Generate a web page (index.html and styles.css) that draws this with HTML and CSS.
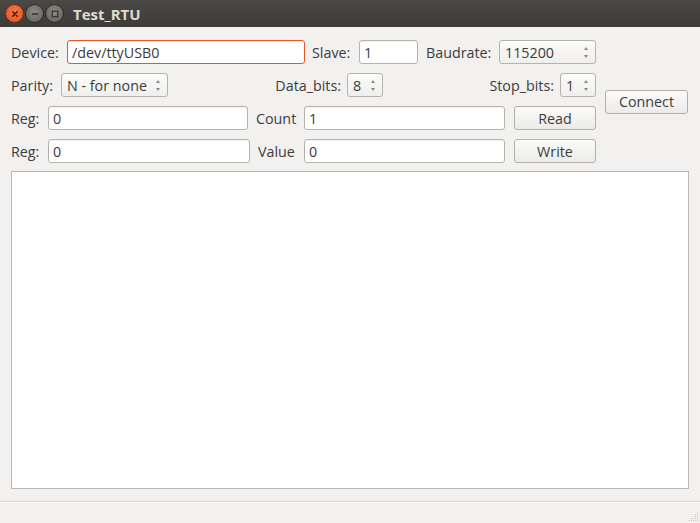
FILE: index.html
```html
<!DOCTYPE html>
<html>
<head>
<meta charset="utf-8">
<link rel="stylesheet" href="styles.css">
</head>
<body>
<div class="window">
  <div class="titlebar">
    <div class="wbtns">
      <span class="wbtn close"><svg width="10" height="10" viewBox="0 0 10 10"><path d="M2.7 2.7 L7.3 7.3 M7.3 2.7 L2.7 7.3" stroke="#3a1a10" stroke-width="1.4" stroke-linecap="round"/></svg></span>
      <span class="wbtn"><svg width="10" height="10" viewBox="0 0 10 10"><path d="M2 5 H8" stroke="#2e2d2a" stroke-width="1.4"/></svg></span>
      <span class="wbtn"><svg width="10" height="10" viewBox="0 0 10 10"><rect x="2.2" y="2.2" width="5.6" height="5.6" fill="none" stroke="#2e2d2a" stroke-width="1.2"/></svg></span>
    </div>
    <div class="title">Test_RTU</div>
  </div>
  <div class="content">
    <div class="top">
      <div class="rows">
        <div class="row">
          <span class="lbl w-device">Device:</span>
          <div class="field focus w238">/dev/ttyUSB0</div>
          <span class="lbl w-slave">Slave:</span>
          <div class="field w59">1</div>
          <span class="lbl w-baud">Baudrate:</span>
          <div class="spin w97"><span>115200</span><span class="arrows"></span></div>
        </div>
        <div class="row">
          <span class="lbl w-parity">Parity:</span>
          <div class="spin w107"><span>N - for none</span><span class="arrows"></span></div>
          <span class="lbl rlbl w179">Data_bits:</span>
          <div class="spin w36"><span>8</span><span class="arrows"></span></div>
          <span class="lbl rlbl w177">Stop_bits:</span>
          <div class="spin w36"><span>1</span><span class="arrows"></span></div>
        </div>
        <div class="row">
          <span class="lbl w-reg">Reg:</span>
          <div class="field w200">0</div>
          <span class="lbl w-count">Count</span>
          <div class="field w201">1</div>
          <div class="btn w82 ml9">Read</div>
        </div>
        <div class="row">
          <span class="lbl w-reg">Reg:</span>
          <div class="field w202">0</div>
          <span class="lbl w-value">Value</span>
          <div class="field w201">0</div>
          <div class="btn w82 ml9">Write</div>
        </div>
      </div>
      <div class="side">
        <div class="btn w83">Connect</div>
      </div>
    </div>
    <div class="output"></div>
  </div>
  <div class="statusbar">
    <svg class="grip" width="12" height="12" viewBox="0 0 12 12">
      <g fill="#c9c6c0">
        <rect x="10" y="2" width="1" height="1"/>
        <rect x="8" y="4" width="1" height="1"/><rect x="10" y="4" width="1" height="1"/>
        <rect x="6" y="6" width="1" height="1"/><rect x="8" y="6" width="1" height="1"/><rect x="10" y="6" width="1" height="1"/>
        <rect x="4" y="8" width="1" height="1"/><rect x="6" y="8" width="1" height="1"/><rect x="8" y="8" width="1" height="1"/><rect x="10" y="8" width="1" height="1"/>
        <rect x="2" y="10" width="1" height="1"/><rect x="4" y="10" width="1" height="1"/><rect x="6" y="10" width="1" height="1"/><rect x="8" y="10" width="1" height="1"/><rect x="10" y="10" width="1" height="1"/>
      </g>
    </svg>
  </div>
</div>
</body>
</html>
```

FILE: styles.css
```css
html, body {
  margin: 0;
  padding: 0;
  background: #f2f1f0;
}
.window {
  width: 700px;
  height: 523px;
  display: flex;
  flex-direction: column;
  font-family: "Open Sans", "DejaVu Sans", sans-serif;
  font-size: 14.3px;
  color: #3c3c3c;
  overflow: hidden;
}
.titlebar {
  height: 27px;
  flex: none;
  background: linear-gradient(#4a4945, #3c3b37);
  display: flex;
  align-items: center;
  padding-left: 5px;
}
.wbtns {
  display: flex;
  gap: 1px;
}
.wbtn {
  width: 19px;
  height: 19px;
  border-radius: 50%;
  background: radial-gradient(circle at 50% 40%, #8d8a84, #5e5c57);
  border: 1px solid #2c2b28;
  display: flex;
  align-items: center;
  justify-content: center;
  box-sizing: border-box;
}
.wbtn.close {
  background: radial-gradient(circle at 50% 40%, #f47a4a, #e24e1b);
  border-color: #7a2c10;
}
.title {
  margin-left: 9px;
  color: #dfdbd2;
  font-weight: bold;
  font-size: 15px;
}
.content {
  flex: 1;
  padding: 13px 11px 0 11px;
  display: flex;
  flex-direction: column;
}
.top {
  display: flex;
}
.rows {
  display: flex;
  flex-direction: column;
  gap: 9px;
}
.row {
  display: flex;
  align-items: center;
  height: 24px;
}
.lbl {
  flex: none;
  white-space: nowrap;
  box-sizing: border-box;
}
.rlbl {
  text-align: right;
  padding-right: 6px;
}
.w-device { width: 56px; }
.w-slave { width: 54px; padding-left: 7px; }
.w-baud { width: 81px; padding-left: 8px; }
.w-parity { width: 50px; }
.w179 { width: 179px; }
.w177 { width: 177px; }
.w-reg { width: 37px; }
.w-count { width: 56px; padding-left: 8px; }
.w-value { width: 54px; padding-left: 8px; }
.field, .spin, .btn {
  flex: none;
  height: 24px;
  box-sizing: border-box;
  border: 1px solid #b6b3ac;
  border-radius: 3px;
  display: flex;
  align-items: center;
}
.field {
  background: #ffffff;
  padding-left: 4px;
  box-shadow: inset 0 1px 1px rgba(0,0,0,0.06);
}
.field.focus {
  border-color: #e5562a;
}
.spin {
  background: linear-gradient(#fbfbfa, #f0efed);
  padding-left: 5px;
  justify-content: space-between;
  padding-right: 6px;
}
.arrows {
  position: relative;
  width: 5px;
  height: 11px;
}
.arrows::before, .arrows::after {
  content: "";
  position: absolute;
  left: 0;
  border-left: 2.5px solid transparent;
  border-right: 2.5px solid transparent;
}
.arrows::before {
  top: 0;
  border-bottom: 3px solid #8b887f;
}
.arrows::after {
  bottom: 0;
  border-top: 3px solid #8b887f;
}
.btn {
  background: linear-gradient(#fbfbfa, #ecebe9);
  justify-content: center;
  border-color: #b3b0a9;
}
.w238 { width: 238px; }
.w59 { width: 59px; }
.w97 { width: 97px; }
.w107 { width: 107px; }
.w36 { width: 36px; }
.w200 { width: 200px; }
.w201 { width: 201px; }
.w202 { width: 202px; }
.w82 { width: 82px; }
.w83 { width: 83px; }
.ml9 { margin-left: 9px; }
.side {
  display: flex;
  align-items: center;
  margin-left: 9px;
}
.output {
  margin-top: 8px;
  height: 318px;
  background: #ffffff;
  border: 1px solid #b9b7b1;
  box-sizing: border-box;
  width: 678px;
}
.statusbar {
  height: 21px;
  flex: none;
  border-top: 1px solid #d6d4cf;
  box-shadow: inset 0 1px 0 #ffffff;
  position: relative;
}
.grip {
  position: absolute;
  right: 1px;
  bottom: 1px;
}
```
